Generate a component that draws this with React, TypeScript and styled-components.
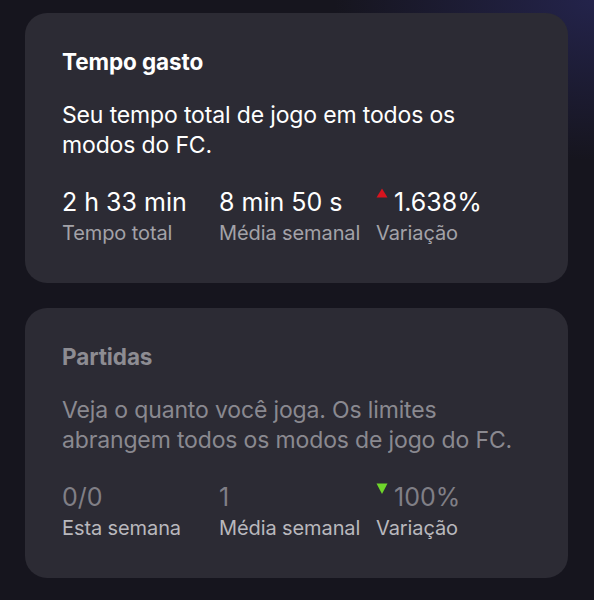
import React from 'react';
import styled, { createGlobalStyle } from 'styled-components';

const GlobalStyle = createGlobalStyle`
  html, body {
    margin: 0;
    padding: 0;
    background: #16151e;
  }
  body {
    font-family: Inter, "Noto Sans", "Liberation Sans", sans-serif;
    -webkit-font-smoothing: antialiased;
  }
`

const Page = styled.div`
  width: 594px;
  height: 600px;
  box-sizing: border-box;
  padding: 13px 26px 0 25px;
  display: flex;
  flex-direction: column;
  gap: 25px;
  overflow: hidden;
  background:
    radial-gradient(ellipse 260px 160px at 100% 0%, rgba(40, 40, 90, 0.75), rgba(40, 40, 90, 0) 100%),
    #16151e;
`

const Card = styled.section`
  border-radius: 22px;
  background: #2c2b34;
  padding: 37px 37px 38px 37px;
  display: flex;
  flex-direction: column;
`

const Title = styled.h2<{ muted?: boolean }>`
  margin: 0;
  font-size: 22.5px;
  line-height: 24px;
  font-weight: 700;
  letter-spacing: -0.1px;
  color: ${(p) => (p.muted ? '#8d8c92' : '#ffffff')};
`

const Description = styled.p<{ muted?: boolean }>`
  margin: 26px 0 0 0;
  max-width: 458px;
  font-size: 23px;
  line-height: 30px;
  font-weight: 400;
  letter-spacing: -0.15px;
  color: ${(p) => (p.muted ? '#8a8990' : '#ffffff')};
`

const Stats = styled.div`
  margin-top: 28px;
  display: grid;
  grid-template-columns: 157px 157px auto;
`

const Stat = styled.div`
  display: flex;
  flex-direction: column;
  gap: 5px;
`

const ValueRow = styled.div`
  display: flex;
  align-items: flex-start;
`

const Value = styled.span<{ muted?: boolean }>`
  font-size: 25px;
  line-height: 28px;
  font-weight: 400;
  letter-spacing: 0;
  white-space: nowrap;
  color: ${(p) => (p.muted ? '#807f86' : '#ffffff')};
`

const Label = styled.span<{ muted?: boolean }>`
  font-size: 20px;
  line-height: 24px;
  letter-spacing: -0.1px;
  white-space: nowrap;
  color: ${(p) => (p.muted ? '#b9b8bd' : '#a3a2a8')};
`

const Trend = styled.svg`
  flex: none;
  width: 12px;
  height: 11px;
  margin: 0 6px 0 0;
`

const TrendIcon: React.FC<{ up: boolean }> = ({ up }) => (
  <Trend viewBox="0 0 12 11">
    {up ? (
      <polygon points="6,0.5 11.5,9.5 0.5,9.5" fill="#d8141e" />
    ) : (
      <polygon points="0.5,0.5 11.5,0.5 6,11" fill="#6fd62b" />
    )}
  </Trend>
)

type StatItem = {
  value: string;
  label: string;
  trend?: 'up' | 'down';
}

type Panel = {
  title: string;
  text: string;
  muted?: boolean;
  stats: StatItem[];
}

const PANELS: Panel[] = [
  {
    title: 'Tempo gasto',
    text: 'Seu tempo total de jogo em todos os modos do FC.',
    stats: [
      { value: '2 h 33 min', label: 'Tempo total' },
      { value: '8 min 50 s', label: 'Média semanal' },
      { value: '1.638%', label: 'Variação', trend: 'up' },
    ],
  },
  {
    title: 'Partidas',
    text: 'Veja o quanto você joga. Os limites abrangem todos os modos de jogo do FC.',
    muted: true,
    stats: [
      { value: '0/0', label: 'Esta semana' },
      { value: '1', label: 'Média semanal' },
      { value: '100%', label: 'Variação', trend: 'down' },
    ],
  },
]

export default function App() {
  return <>
    <GlobalStyle />
    <Page>
      {
        PANELS.map(panel => <Card key={panel.title}>
          <Title muted={panel.muted}>{panel.title}</Title>
          <Description muted={panel.muted}>{panel.text}</Description>
          <Stats>
            {
              panel.stats.map(stat => <Stat key={stat.label}>
                <ValueRow>
                  {stat.trend && <TrendIcon up={stat.trend === 'up'} />}
                  <Value muted={panel.muted}>{stat.value}</Value>
                </ValueRow>
                <Label muted={panel.muted}>{stat.label}</Label>
              </Stat>)
            }
          </Stats>
        </Card>)
      }
    </Page>
  </>
}
